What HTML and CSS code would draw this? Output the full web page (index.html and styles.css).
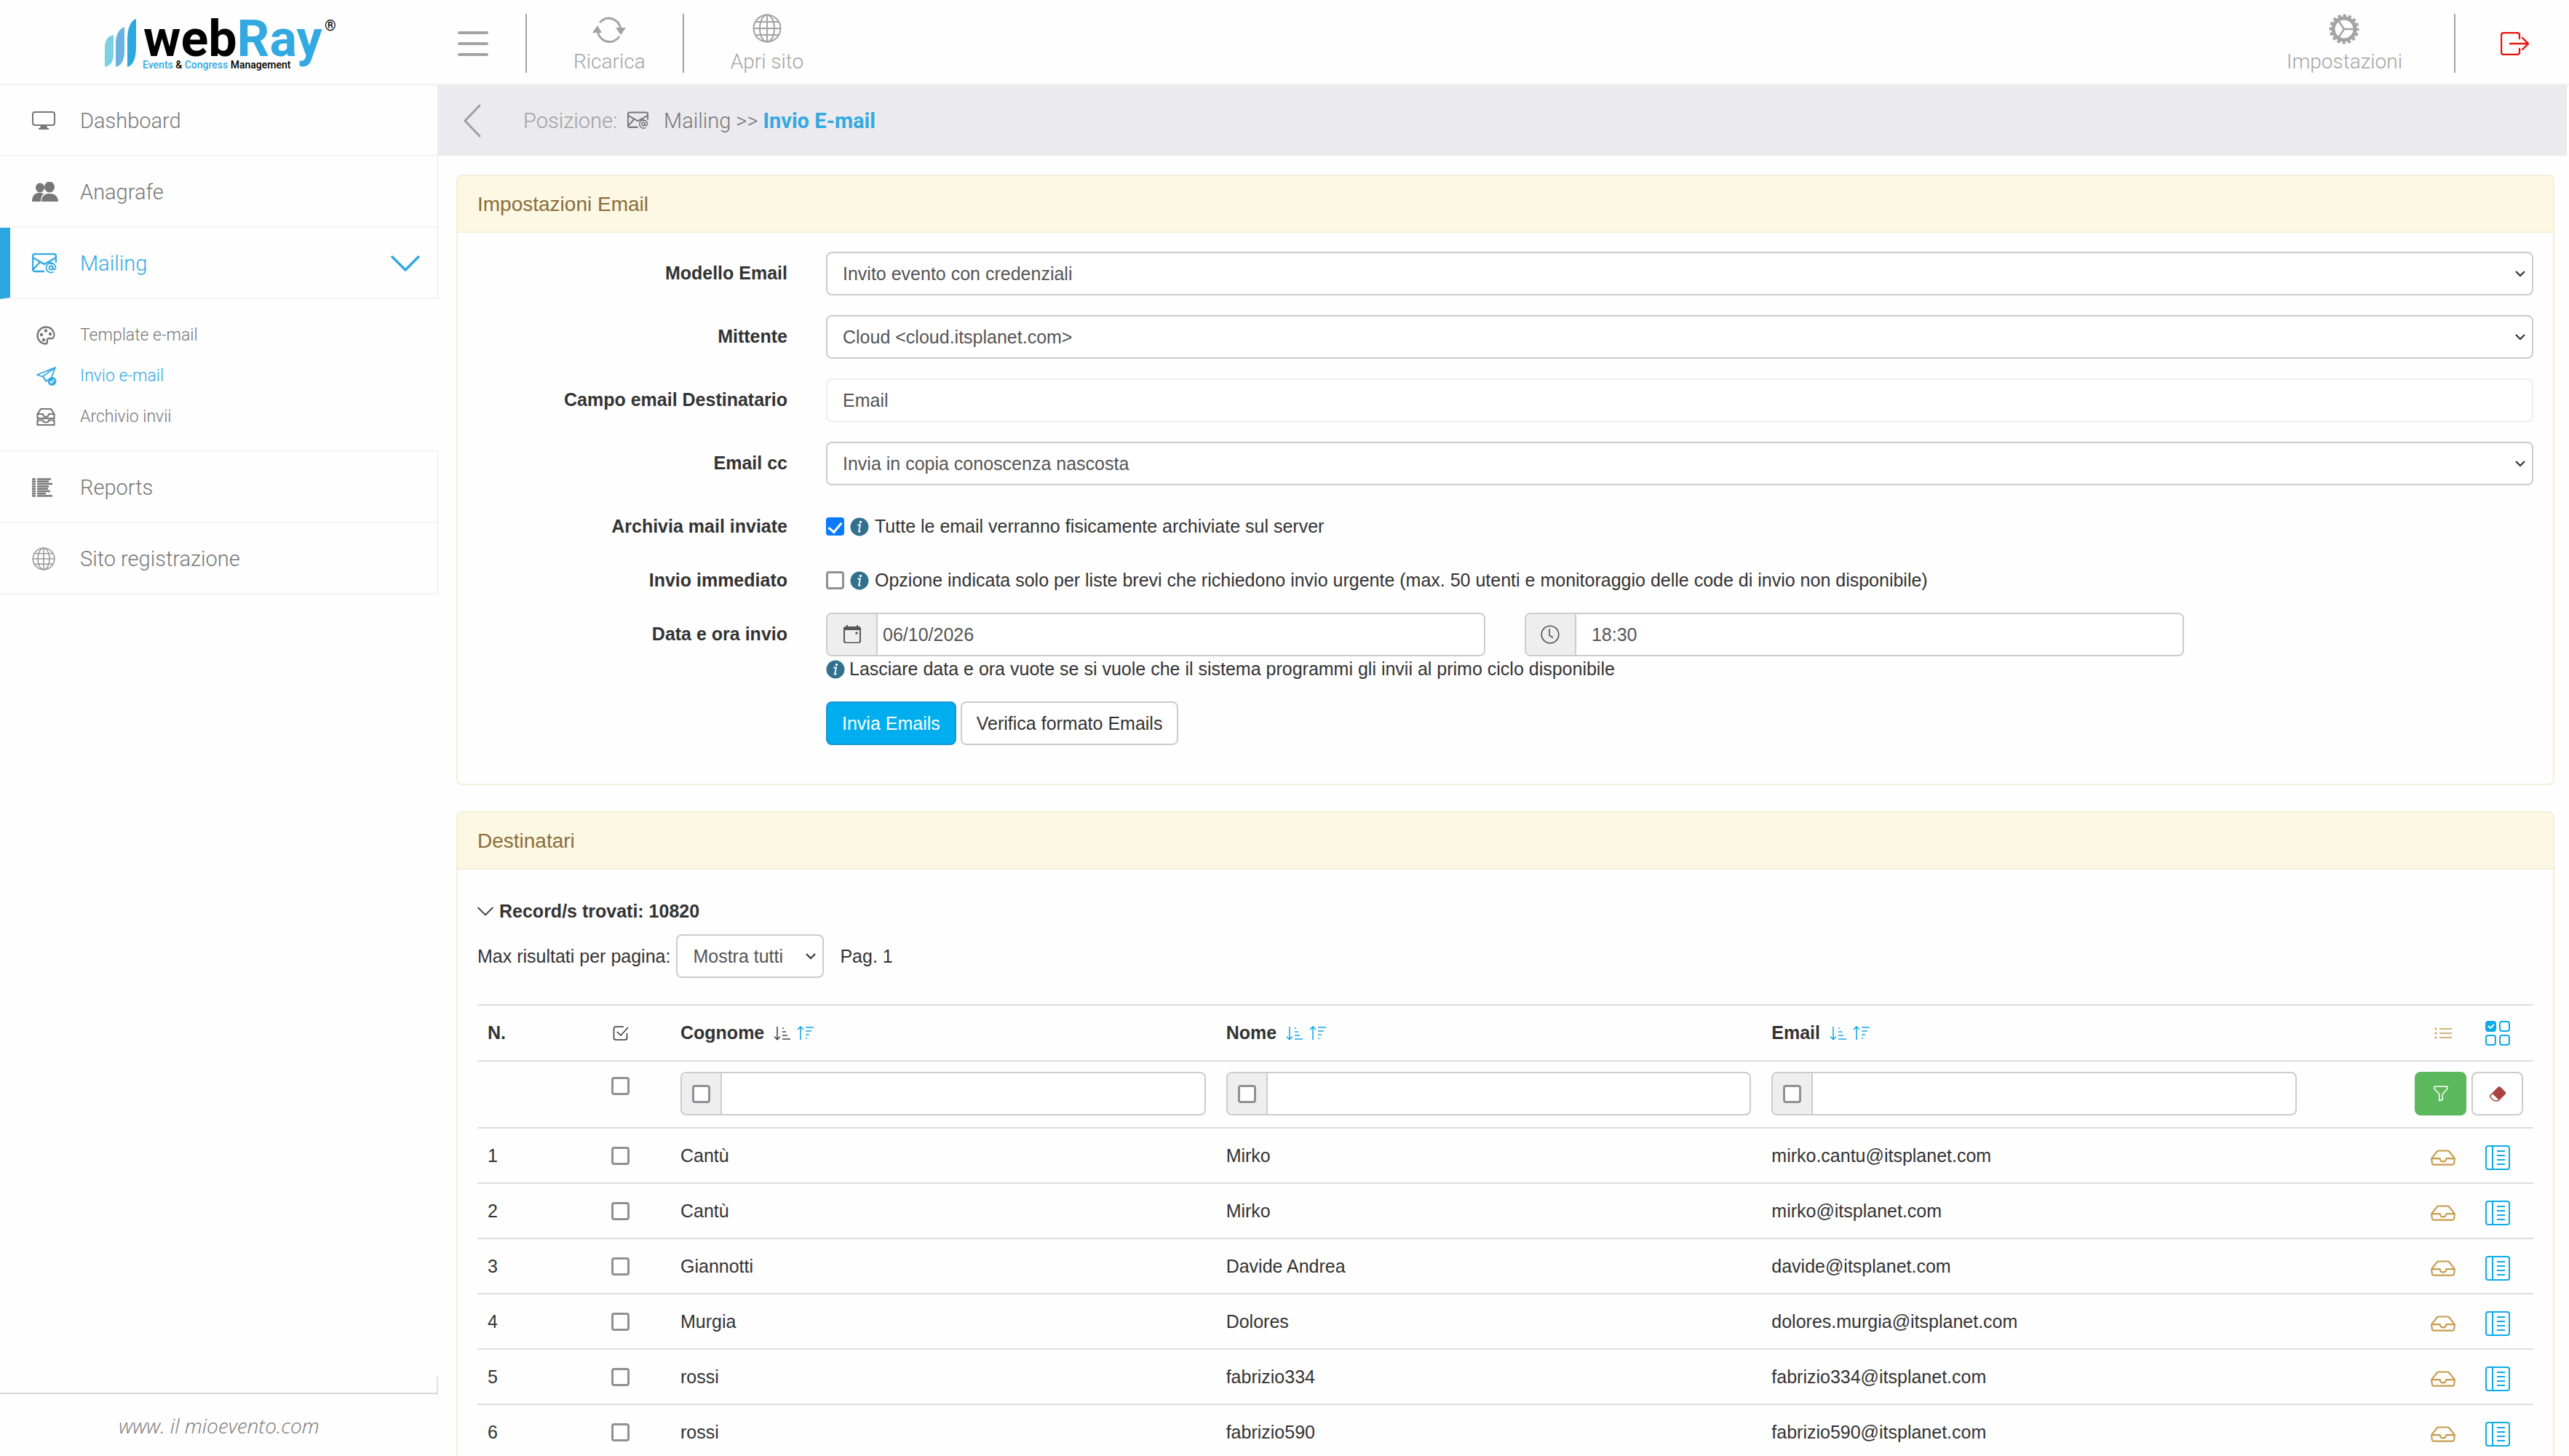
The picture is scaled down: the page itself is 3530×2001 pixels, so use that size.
FILE: index.html
```html
<!DOCTYPE html>
<html lang="it">
<head>
<meta charset="utf-8">
<meta name="viewport" content="width=device-width, initial-scale=1">
<title>webRay - Invio E-mail</title>
<link rel="stylesheet" href="styles.css">
</head>
<body>
<svg class="sprite" aria-hidden="true">
  <symbol id="i-menu" viewBox="0 0 42 36"><path d="M2 4h38M2 19h38M2 34h38" fill="none" stroke="currentColor" stroke-width="4" stroke-linecap="round" transform="translate(0 -1)"/></symbol>
  <symbol id="i-reload" viewBox="0 0 46 44"><path d="M10 12A17 19 0 0 1 39 21M37 31A17 19 0 0 1 7 24" fill="none" stroke="currentColor" stroke-width="3"/><path d="M32 19h14l-7 10zM0 26h13l-6-10z" fill="currentColor"/></symbol>
  <symbol id="i-globe" viewBox="0 0 40 40"><g fill="none" stroke="currentColor" stroke-width="2"><circle cx="20" cy="20" r="18.500"/><ellipse cx="20" cy="20" rx="10" ry="18.500"/><path d="M20 1v38M1 20h38M4 11h32M4 29h32"/></g></symbol>
  <symbol id="i-gear" viewBox="0 0 42 42"><circle cx="21" cy="21" r="15" fill="none" stroke="currentColor" stroke-width="5"/><circle cx="21" cy="21" r="18.500" fill="none" stroke="currentColor" stroke-width="4" stroke-dasharray="4.200 3.065" stroke-dashoffset="2"/><path d="M21 21h14M21 21l-8-12M21 21l-8 12" stroke="currentColor" stroke-width="2.500" fill="none"/></symbol>
  <symbol id="i-logout" viewBox="0 0 40 32"><path d="M26 9V4a3 3 0 0 0-3-3H4a3 3 0 0 0-3 3v24a3 3 0 0 0 3 3h19a3 3 0 0 0 3-3v-5M13 16h25M30 8l8 8-8 8" fill="none" stroke="currentColor" stroke-width="2.400" stroke-linecap="round" stroke-linejoin="round"/></symbol>
  <symbol id="i-left" viewBox="0 0 26 48"><path d="M23 3L3 24l20 21" fill="none" stroke="currentColor" stroke-width="3" stroke-linecap="round" stroke-linejoin="round"/></symbol>
  <symbol id="i-down" viewBox="0 0 40 24"><path d="M2 3l18 18L38 3" fill="none" stroke="currentColor" stroke-width="3.500" stroke-linecap="round" stroke-linejoin="round"/></symbol>
  <symbol id="i-caret" viewBox="0 0 14 10"><path d="M1 2l6 6 6-6" fill="none" stroke="currentColor" stroke-width="2.200"/></symbol>
  <symbol id="i-monitor" viewBox="0 0 32 26"><rect x="1" y="1" width="30" height="18" rx="3" fill="none" stroke="currentColor" stroke-width="2"/><path d="M12 19h8l1 4h2v2H9v-2h2z" fill="currentColor"/></symbol>
  <symbol id="i-people" viewBox="0 0 36 28"><g fill="currentColor"><ellipse cx="11" cy="8" rx="6" ry="6.500"/><path d="M0 27c0-8 4-12 10-12 2 0 4 0 6 1-3 3-4 6-4 11z"/><ellipse cx="24" cy="7" rx="7" ry="7.500"/><path d="M13 27c0-8 5-11 11-11s12 3 12 11z"/></g></symbol>
  <symbol id="i-mail-at" viewBox="0 0 34 28"><g fill="none" stroke="currentColor" stroke-width="2.400"><path d="M17 25H4a3 3 0 0 1-3-3V4a3 3 0 0 1 3-3h26a3 3 0 0 1 3 3v9M1 6l16 9 16-9M1 23l10-11M23 12l5 3"/><circle cx="26" cy="20" r="2.500" stroke-width="1.800"/><path d="M28.500 17.500v3.500c0 2.500 4 2 4-1.500a6.500 6.500 0 1 0-3 6" stroke-width="1.800"/></g></symbol>
  <symbol id="i-palette" viewBox="0 0 26 26"><path d="M13 1.500a11.500 11.500 0 1 0 0 23c3 0 1-4 2-6 1.500-3 5-.500 7-1.500C27 14 24 1.500 13 1.500z" fill="none" stroke="currentColor" stroke-width="2.400"/><g fill="currentColor"><circle cx="7" cy="12" r="2.200"/><circle cx="13" cy="6.500" r="2.200"/><circle cx="19" cy="11" r="2.200"/><circle cx="10" cy="19" r="2.200"/></g></symbol>
  <symbol id="i-send" viewBox="0 0 28 26"><path d="M13 19l-4-6L26 1 1 11l8 3M26 1l-5 13M9 13l4 7 3-2" fill="none" stroke="currentColor" stroke-width="1.800" stroke-linejoin="round"/><circle cx="21.500" cy="20" r="6" fill="currentColor"/><path d="M18.500 20l2.200 2.200 3.600-4.400" fill="none" stroke="#fff" stroke-width="1.600"/></symbol>
  <symbol id="i-trays" viewBox="0 0 26 26"><path d="M1.500 9L6 2h14l4.500 7v6h-23zM1.500 9H9c0 5 8 5 8 0h7.500M1.500 17.500H9c0 4 8 4 8 0h7.500V24h-23z" fill="none" stroke="currentColor" stroke-width="2.200" stroke-linejoin="round"/></symbol>
  <symbol id="i-report" viewBox="0 0 28 26"><path d="M0 1.500h5M0 4.800h5M0 8.100h5M0 11.400h5M0 14.700h5M0 18h5M0 21.300h5M0 24.600h5M7 1.500h19M7 4.800h16M7 8.100h21M7 11.400h16M7 14.700h15M7 18h18M7 21.300h12M7 24.600h21" fill="none" stroke="currentColor" stroke-width="2.500"/></symbol>
  <symbol id="i-info" viewBox="0 0 26 26"><circle cx="13" cy="13" r="12.500" fill="#31708f"/><path d="M10.500 10.500h3.500l-2 9h2.500" fill="none" stroke="#fff" stroke-width="1.800"/><circle cx="14.500" cy="6.500" r="1.700" fill="#fff"/></symbol>
  <symbol id="i-calendar" viewBox="0 0 26 26"><path d="M5 0h2v2h12V0h2v2h1a3 3 0 0 1 3 3v17a3 3 0 0 1-3 3H4a3 3 0 0 1-3-3V5a3 3 0 0 1 3-3h1zM3 7v15l1 1.500h18l1-1.500V7z" fill="currentColor" fill-rule="evenodd"/><circle cx="19" cy="11" r="1.700" fill="currentColor"/></symbol>
  <symbol id="i-clock" viewBox="0 0 26 26"><circle cx="13" cy="13" r="11.800" fill="none" stroke="currentColor" stroke-width="1.600"/><path d="M12 5v9l5 3.500" fill="none" stroke="currentColor" stroke-width="1.600"/></symbol>
  <symbol id="i-check-sq" viewBox="0 0 22 22"><path d="M15 2H4a2.500 2.500 0 0 0-2.500 2.500v13A2.500 2.500 0 0 0 4 20h13a2.500 2.500 0 0 0 2.500-2.500V11M6 9l5 5L21 3" fill="none" stroke="currentColor" stroke-width="1.500"/></symbol>
  <symbol id="i-sort-down" viewBox="0 0 24 22"><path d="M5 2v17M1 15.500l4 4 4-4M12 4h2M12 9h5M12 14h7M12 19h11" fill="none" stroke="currentColor" stroke-width="1.600"/></symbol>
  <symbol id="i-sort-up" viewBox="0 0 24 22"><path d="M5 20V2M1 6l4-4 4 4M12 3h11M12 8h8M12 13h5M12 18h2" fill="none" stroke="currentColor" stroke-width="1.600"/></symbol>
  <symbol id="i-list" viewBox="0 0 24 16"><path d="M7 2h17M7 8h17M7 14h17" fill="none" stroke="currentColor" stroke-width="1.300"/><g fill="currentColor"><circle cx="2" cy="2" r="1.400"/><circle cx="2" cy="8" r="1.400"/><circle cx="2" cy="14" r="1.400"/></g></symbol>
  <symbol id="i-grid" viewBox="0 0 34 34"><g fill="none" stroke="currentColor" stroke-width="2"><rect x="1" y="1" width="13" height="13" rx="3" fill="currentColor"/><rect x="20" y="1" width="13" height="13" rx="3"/><rect x="1" y="20" width="13" height="13" rx="3"/><rect x="20" y="20" width="13" height="13" rx="3"/></g><path d="M4 7l3 3 5-5" fill="none" stroke="#fff" stroke-width="1.800"/></symbol>
  <symbol id="i-funnel" viewBox="0 0 16 16"><path fill="currentColor" d="M1.500 1.500A.5.500 0 0 1 2 1h12a.5.500 0 0 1 .500.500v2a.5.500 0 0 1-.128.334L10 8.692V13.500a.5.500 0 0 1-.342.474l-3 1A.5.500 0 0 1 6 14.500V8.692L1.628 3.834A.5.500 0 0 1 1.500 3.500v-2zm1 .500v1.308l4.372 4.858A.5.500 0 0 1 7 8.500v5.306l2-.666V8.500a.5.500 0 0 1 .128-.334L13.500 3.308V2h-11z"/></symbol>
  <symbol id="i-eraser" viewBox="0 0 16 16"><path fill="currentColor" d="M8.086 2.207a2 2 0 0 1 2.828 0l3.879 3.879a2 2 0 0 1 0 2.828l-5.500 5.500A2 2 0 0 1 7.879 15H5.120a2 2 0 0 1-1.414-.586l-2.500-2.500a2 2 0 0 1 0-2.828l6.879-6.879zm.660 11.340L3.453 8.254 1.914 9.793a1 1 0 0 0 0 1.414l2.500 2.500a1 1 0 0 0 .707.293H7.880a1 1 0 0 0 .707-.293l.160-.160z"/></symbol>
  <symbol id="i-inbox" viewBox="0 3 16 10"><path fill="currentColor" d="M4.980 4a.5.500 0 0 0-.390.188L1.540 8H6a.5.500 0 0 1 .500.500 1.500 1.500 0 1 0 3 0A.5.500 0 0 1 10 8h4.460l-3.050-3.812A.5.500 0 0 0 11.020 4H4.980zm9.954 5H10.450a2.500 2.500 0 0 1-4.900 0H1.066l.320 2.562a.5.500 0 0 0 .497.438h12.234a.5.500 0 0 0 .496-.438L14.933 9zM3.809 3.563A1.500 1.500 0 0 1 4.981 3h6.038a1.500 1.500 0 0 1 1.172.563l3.700 4.625a.5.500 0 0 1 .105.374l-.390 3.124A1.500 1.500 0 0 1 14.117 13H1.883a1.500 1.500 0 0 1-1.489-1.314l-.390-3.124a.5.500 0 0 1 .106-.374l3.700-4.625z"/></symbol>
  <symbol id="i-book" viewBox="0 0 34 34"><g fill="none" stroke="currentColor" stroke-width="2"><rect x="1" y="1" width="32" height="32" rx="3"/><path d="M10 1v32M16 8h11M16 14h11M16 20h11M16 26h11"/></g></symbol>
</svg>

<div class="app">
  <header class="topbar">
    <a class="brand" href="#" aria-label="webRay">
      <svg class="logo" viewBox="0 0 320 72">
        <path d="M0 68V42C0 32 3 26 12 24v26c0 10-3 16-12 18z" fill="#7cd0e4"/>
        <path d="M15 68V36c0-12 4-20 12-23v34c0 11-4 19-12 21z" fill="#6cb2e0"/>
        <path d="M31 68V30C31 14 36 4 43 2v38c0 16-4 26-12 28z" fill="#2ba8e0"/>
        <text class="logo-name" x="53" y="53">web<tspan fill="#33a9e2">Ray</tspan></text>
        <text class="logo-tag" x="52" y="70"><tspan fill="#33a9e2">Events</tspan> &amp; <tspan fill="#33a9e2">Congress</tspan> Management</text>
        <text class="logo-reg" x="302" y="18">®</text>
      </svg>
    </a>
    <button class="tool tool-menu" type="button" aria-label="Menu"><svg width="42" height="36"><use href="#i-menu"/></svg></button>
    <a class="tool" href="#"><svg width="46" height="44"><use href="#i-reload"/></svg><span>Ricarica</span></a>
    <a class="tool" href="#"><svg width="40" height="40"><use href="#i-globe"/></svg><span>Apri sito</span></a>
    <a class="tool tool-settings" href="#"><svg width="42" height="42"><use href="#i-gear"/></svg><span>Impostazioni</span></a>
    <a class="tool-exit" href="#" aria-label="Esci"><svg width="40" height="32"><use href="#i-logout"/></svg></a>
  </header>

  <nav class="sidebar">
    <a class="item" href="#"><svg width="32" height="26"><use href="#i-monitor"/></svg><span>Dashboard</span></a>
    <a class="item" href="#"><svg width="36" height="28"><use href="#i-people"/></svg><span>Anagrafe</span></a>
    <a class="item active" href="#"><svg width="34" height="28"><use href="#i-mail-at"/></svg><span>Mailing</span><svg class="chev" width="40" height="24"><use href="#i-down"/></svg></a>
    <div class="sub">
      <a href="#"><svg width="26" height="26"><use href="#i-palette"/></svg><span>Template e-mail</span></a>
      <a class="current" href="#"><svg width="28" height="26"><use href="#i-send"/></svg><span>Invio e-mail</span></a>
      <a href="#"><svg width="26" height="26"><use href="#i-trays"/></svg><span>Archivio invii</span></a>
    </div>
    <a class="item" href="#"><svg width="28" height="26"><use href="#i-report"/></svg><span>Reports</span></a>
    <a class="item" href="#"><svg class="pale" width="32" height="32"><use href="#i-globe"/></svg><span>Sito registrazione</span></a>
    <div class="spacer"></div>
    <div class="edge"></div>
    <a class="site" href="#">www. il mioevento.com</a>
  </nav>

  <main class="content">
    <div class="crumbs">
      <a class="back" href="#" aria-label="Indietro"><svg width="26" height="48"><use href="#i-left"/></svg></a>
      <span class="pos">Posizione:</span>
      <svg class="crumb-icon" width="29" height="25"><use href="#i-mail-at"/></svg>
      <span class="path">Mailing &gt;&gt; <b>Invio E-mail</b></span>
    </div>

    <section class="panel">
      <h2>Impostazioni Email</h2>
      <form class="form">
        <div class="row">
          <label for="modello">Modello Email</label>
          <div class="select"><select id="modello"><option>Invito evento con credenziali</option></select><svg width="14" height="10"><use href="#i-caret"/></svg></div>
        </div>
        <div class="row">
          <label for="mittente">Mittente</label>
          <div class="select"><select id="mittente"><option>Cloud &lt;cloud.itsplanet.com&gt;</option></select><svg width="14" height="10"><use href="#i-caret"/></svg></div>
        </div>
        <div class="row">
          <label for="campo">Campo email Destinatario</label>
          <input class="control quiet" id="campo" type="text" value="Email" readonly>
        </div>
        <div class="row">
          <label for="cc">Email cc</label>
          <div class="select"><select id="cc"><option>Invia in copia conoscenza nascosta</option></select><svg width="14" height="10"><use href="#i-caret"/></svg></div>
        </div>
        <div class="row">
          <label for="archivia">Archivia mail inviate</label>
          <div class="tick"><input id="archivia" type="checkbox" checked><svg width="26" height="26"><use href="#i-info"/></svg><span>Tutte le email verranno fisicamente archiviate sul server</span></div>
        </div>
        <div class="row">
          <label for="immediato">Invio immediato</label>
          <div class="tick"><input id="immediato" type="checkbox"><svg width="26" height="26"><use href="#i-info"/></svg><span>Opzione indicata solo per liste brevi che richiedono invio urgente (max. 50 utenti e monitoraggio delle code di invio non disponibile)</span></div>
        </div>
        <div class="row">
          <label for="data">Data e ora invio</label>
          <div>
            <div class="when">
              <div class="group"><span class="addon"><svg width="26" height="26"><use href="#i-calendar"/></svg></span><input class="date" id="data" type="text" value="06/10/2026"></div>
              <div class="group"><span class="addon"><svg width="26" height="26"><use href="#i-clock"/></svg></span><input type="text" value="18:30" aria-label="Ora invio"></div>
            </div>
            <p class="hint"><svg width="26" height="26"><use href="#i-info"/></svg><span>Lasciare data e ora vuote se si vuole che il sistema programmi gli invii al primo ciclo disponibile</span></p>
            <div class="buttons"><button class="btn primary" type="submit">Invia Emails</button><button class="btn" type="button">Verifica formato Emails</button></div>
          </div>
        </div>
      </form>
    </section>

    <section class="panel">
      <h2>Destinatari</h2>
      <div class="results">
        <p class="found"><svg width="22" height="13"><use href="#i-down"/></svg>Record/s trovati: 10820</p>
        <div class="paging">
          <label for="max">Max risultati per pagina:</label>
          <div class="select small"><select id="max"><option>Mostra tutti</option></select><svg width="14" height="10"><use href="#i-caret"/></svg></div>
          <span class="page">Pag. 1</span>
        </div>
        <table>
          <colgroup><col class="c-num"><col class="c-tick"><col><col><col><col class="c-act"></colgroup>
          <thead>
            <tr>
              <th scope="col">N.</th>
              <th scope="col" class="mid"><svg width="22" height="22"><use href="#i-check-sq"/></svg></th>
              <th scope="col"><div class="sort">Cognome<a class="on" href="#" aria-label="Crescente"><svg width="24" height="22"><use href="#i-sort-down"/></svg></a><a href="#" aria-label="Decrescente"><svg width="24" height="22"><use href="#i-sort-up"/></svg></a></div></th>
              <th scope="col"><div class="sort">Nome<a href="#" aria-label="Crescente"><svg width="24" height="22"><use href="#i-sort-down"/></svg></a><a href="#" aria-label="Decrescente"><svg width="24" height="22"><use href="#i-sort-up"/></svg></a></div></th>
              <th scope="col"><div class="sort">Email<a href="#" aria-label="Crescente"><svg width="24" height="22"><use href="#i-sort-down"/></svg></a><a href="#" aria-label="Decrescente"><svg width="24" height="22"><use href="#i-sort-up"/></svg></a></div></th>
              <th scope="col"><div class="actions"><a class="gold" href="#" aria-label="Elenco"><svg width="24" height="16"><use href="#i-list"/></svg></a><a href="#" aria-label="Seleziona campi"><svg width="34" height="34"><use href="#i-grid"/></svg></a></div></th>
            </tr>
            <tr class="filters">
              <td></td>
              <td class="mid first"><input type="checkbox" aria-label="Seleziona tutti"></td>
              <td><div class="group"><span class="addon slim"><input type="checkbox" aria-label="Cognome esatto"></span><input type="text" aria-label="Filtra cognome"></div></td>
              <td><div class="group"><span class="addon slim"><input type="checkbox" aria-label="Nome esatto"></span><input type="text" aria-label="Filtra nome"></div></td>
              <td><div class="group"><span class="addon slim"><input type="checkbox" aria-label="Email esatta"></span><input type="text" aria-label="Filtra email"></div></td>
              <td><div class="actions"><button class="btn green" type="button" aria-label="Filtra"><svg width="24" height="24"><use href="#i-funnel"/></svg></button><button class="btn red" type="button" aria-label="Azzera"><svg width="24" height="24"><use href="#i-eraser"/></svg></button></div></td>
            </tr>
          </thead>
          <tbody>
            <tr><td>1</td><td class="mid"><input type="checkbox" aria-label="Seleziona 1"></td><td>Cantù</td><td>Mirko</td><td>mirko.cantu@itsplanet.com</td><td><div class="actions"><a class="gold" href="#" aria-label="Posta"><svg width="34" height="22"><use href="#i-inbox"/></svg></a><a href="#" aria-label="Scheda"><svg width="34" height="34"><use href="#i-book"/></svg></a></div></td></tr>
            <tr><td>2</td><td class="mid"><input type="checkbox" aria-label="Seleziona 2"></td><td>Cantù</td><td>Mirko</td><td>mirko@itsplanet.com</td><td><div class="actions"><a class="gold" href="#" aria-label="Posta"><svg width="34" height="22"><use href="#i-inbox"/></svg></a><a href="#" aria-label="Scheda"><svg width="34" height="34"><use href="#i-book"/></svg></a></div></td></tr>
            <tr><td>3</td><td class="mid"><input type="checkbox" aria-label="Seleziona 3"></td><td>Giannotti</td><td>Davide Andrea</td><td>davide@itsplanet.com</td><td><div class="actions"><a class="gold" href="#" aria-label="Posta"><svg width="34" height="22"><use href="#i-inbox"/></svg></a><a href="#" aria-label="Scheda"><svg width="34" height="34"><use href="#i-book"/></svg></a></div></td></tr>
            <tr><td>4</td><td class="mid"><input type="checkbox" aria-label="Seleziona 4"></td><td>Murgia</td><td>Dolores</td><td>dolores.murgia@itsplanet.com</td><td><div class="actions"><a class="gold" href="#" aria-label="Posta"><svg width="34" height="22"><use href="#i-inbox"/></svg></a><a href="#" aria-label="Scheda"><svg width="34" height="34"><use href="#i-book"/></svg></a></div></td></tr>
            <tr><td>5</td><td class="mid"><input type="checkbox" aria-label="Seleziona 5"></td><td>rossi</td><td>fabrizio334</td><td>fabrizio334@itsplanet.com</td><td><div class="actions"><a class="gold" href="#" aria-label="Posta"><svg width="34" height="22"><use href="#i-inbox"/></svg></a><a href="#" aria-label="Scheda"><svg width="34" height="34"><use href="#i-book"/></svg></a></div></td></tr>
            <tr><td>6</td><td class="mid"><input type="checkbox" aria-label="Seleziona 6"></td><td>rossi</td><td>fabrizio590</td><td>fabrizio590@itsplanet.com</td><td><div class="actions"><a class="gold" href="#" aria-label="Posta"><svg width="34" height="22"><use href="#i-inbox"/></svg></a><a href="#" aria-label="Scheda"><svg width="34" height="34"><use href="#i-book"/></svg></a></div></td></tr>
          </tbody>
        </table>
      </div>
    </section>
  </main>
</div>
</body>
</html>
```
FILE: styles.css
```css
* { box-sizing: border-box; }

body {
  margin: 0;
  font: 25px/35px "Liberation Sans", Arial, sans-serif;
  color: #333;
  background: #fefefe;
}

a { color: inherit; text-decoration: none; }
p, h2 { margin: 0; }
svg { display: block; flex: none; }
.sprite { position: absolute; width: 0; height: 0; }
input, select, button { font: inherit; color: inherit; margin: 0; }

.app {
  display: grid;
  grid-template: 117px minmax(0, 1fr) / 602px minmax(0, 1fr);
  height: 100vh;
}

/* Top bar */
.topbar {
  grid-column: 1 / -1;
  display: flex;
  align-items: center;
  padding-top: 4px;
  border-bottom: 2px solid #f2f2f4;
  font: 300 28px/36px Roboto, sans-serif;
  color: #a3a3a3;
}
.brand { width: 602px; padding-left: 144px; }
.logo { width: 320px; height: 72px; overflow: visible; }
.logo-name { font: 700 70px Roboto, sans-serif; }
.logo-tag { font: 500 14px Roboto, sans-serif; }
.logo-reg { font: 700 20px Roboto, sans-serif; }
.tool {
  display: flex;
  flex-direction: column;
  align-items: center;
  justify-content: space-between;
  height: 81px;
  padding: 0 51px 0 64px;
  border-right: 2px solid #a3a3a3;
}
.tool + .tool:nth-child(4) { border-right: 0; }
.tool span { line-height: 30px; }
.tool-menu {
  justify-content: center;
  padding: 0 51px 0 27px;
  border-width: 0 2px 0 0;
  background: none;
}
.tool-settings { margin-left: auto; padding: 0 71px 0 0; }
.tool-exit { padding: 0 54px 0 62px; color: #e8120c; }

/* Side menu */
.sidebar {
  display: flex;
  flex-direction: column;
  font: 300 29px/36px Roboto, sans-serif;
  color: #777;
}
.item {
  display: grid;
  grid-template-columns: 66px 1fr auto;
  align-items: center;
  height: 98px;
  padding: 2px 24px 0 44px;
  border-bottom: 2px solid #f4f4f4;
  border-right: 1px solid #e8e8ea;
}
.item.active { color: #33a9e2; border-left: 14px solid #2ba8e0; padding-left: 30px; }
.pale { color: #999; }
.sub {
  display: flex;
  flex-direction: column;
  gap: 20px;
  padding: 32px 0 28px 50px;
  border-bottom: 2px solid #f4f4f4;
  font-size: 23px;
}
.sub a { display: grid; grid-template-columns: 60px 1fr; align-items: center; }
.sub .current { color: #33a9e2; }
.spacer { flex: 1; }
.edge { height: 22px; border-right: 2px solid #e0e0e0; }
.site {
  height: 87px;
  padding-top: 25px;
  border-top: 2px solid #d8d8d8;
  text-align: center;
  font: italic 300 28px/36px "Open Sans", "Noto Sans", sans-serif;
}

/* Content */
.content { overflow: auto; scrollbar-width: none; }
.crumbs {
  display: flex;
  align-items: center;
  height: 97px;
  margin-right: 3px;
  padding-left: 34px;
  background: #ebeaee;
  font: 300 29px/36px Roboto, sans-serif;
  color: #777;
}
.back, .pos { color: #a0a0a0; }
.pos { margin: 0 14px 0 57px; }
.crumb-icon { margin-right: 21px; }
.path b { font-weight: 700; color: #33a9e2; }

.panel {
  margin: 26px 20px 36px 25px;
  border: 2px solid #f5efd5;
  border-radius: 8px;
}
.panel h2 {
  padding: 19px 27px 17px;
  border-bottom: 2px solid #f5efd5;
  border-radius: 6px 6px 0 0;
  background: #fcf8e3;
  color: #8a6d3b;
  font-size: 28px;
  font-weight: 400;
  line-height: 40px;
}

.form { display: flex; flex-direction: column; gap: 27px; padding: 26px 27px 53px; }
.row { display: grid; grid-template-columns: 426px minmax(0, 1fr); gap: 53px; align-items: start; }
.row > label { padding-top: 12px; text-align: right; font-weight: 700; }

.select { display: grid; align-items: center; }
.select select, .select svg { grid-area: 1 / 1; }
.select svg { justify-self: end; margin-right: 11px; pointer-events: none; }
.select select, .control {
  appearance: none;
  width: 100%;
  height: 60px;
  padding: 0 21px;
  border: 2px solid #ccc;
  border-radius: 8px;
  background: #fff;
  color: #555;
}
.control.quiet { border-color: #ededed; }
.small { width: 203px; }

input[type="checkbox"] {
  appearance: none;
  display: block;
  flex: none;
  width: 25px;
  height: 25px;
  border: 3px solid #8f8f97;
  border-radius: 4px;
  background: #fff;
}
input[type="checkbox"]:checked { border-color: #0a7aff; background: #0a7aff; }
input[type="checkbox"]:checked::after {
  content: "";
  display: block;
  width: 8px;
  height: 15px;
  margin: 0 auto;
  border: solid #fff;
  border-width: 0 3px 3px 0;
  transform: rotate(40deg);
}

.tick { display: flex; align-items: center; gap: 8px; padding-top: 12px; }
.when { display: grid; grid-template-columns: 1fr 1fr; gap: 54px; width: calc(80% - 11px); }
.group {
  display: flex;
  height: 60px;
  border: 2px solid #ccc;
  border-radius: 8px;
  background: #fff;
  overflow: hidden;
}
.group input[type="text"] { flex: 1; min-width: 0; padding: 0 21px; border: 0; background: none; color: #555; }
.group input.date[type="text"] { padding-left: 7px; }
.addon {
  display: grid;
  place-items: center;
  width: 69px;
  border-right: 2px solid #ccc;
  background: #eee;
  color: #555;
}
.addon.slim { width: 55px; }
.hint { display: flex; align-items: center; gap: 6px; }
.buttons { display: flex; gap: 6px; padding-top: 27px; }
.btn {
  height: 60px;
  padding: 0 20px;
  border: 2px solid #ccc;
  border-radius: 8px;
  background: #fff;
}
.btn.primary { border-color: #1c94d2; background: #00aeef; color: #fff; }

/* Results */
.results { padding: 40px 27px; }
.found { display: flex; align-items: center; gap: 8px; font-weight: 700; }
.paging { display: flex; align-items: center; gap: 8px; margin: 14px 0 36px; }
.page { padding-left: 14px; }

table { width: 100%; table-layout: fixed; border-collapse: separate; border-spacing: 0; }
.c-num { width: 128px; }
.c-tick { width: 137px; }
.c-act { width: 311px; }
th, td {
  height: 76px;
  padding: 0 14px;
  border-top: 2px solid #ddd;
  text-align: left;
  vertical-align: middle;
}
th { height: 77px; }
.mid svg, .mid input { margin: 0 auto; }
.filters td { height: 92px; padding-top: 14px; vertical-align: top; }
.filters td.first { padding-top: 21px; }
.sort { display: flex; align-items: center; gap: 8px; }
.sort a { color: #18a8ea; }
.sort a:first-child { margin-left: 5px; }
.sort .on { color: #444; }
.actions {
  display: grid;
  grid-template-columns: 71px 71px;
  gap: 7px;
  justify-content: end;
  place-items: center;
  color: #0eaaea;
}
tbody .actions { padding-top: 6px; }
.actions .gold { padding-left: 7px; color: #c69c4e; }
.actions .btn { display: grid; place-items: center; width: 71px; padding: 0; }
.btn.green { border-color: #5cb85c; background: #5cb85c; color: #fff; }
.btn.red { color: #a94442; }
```
